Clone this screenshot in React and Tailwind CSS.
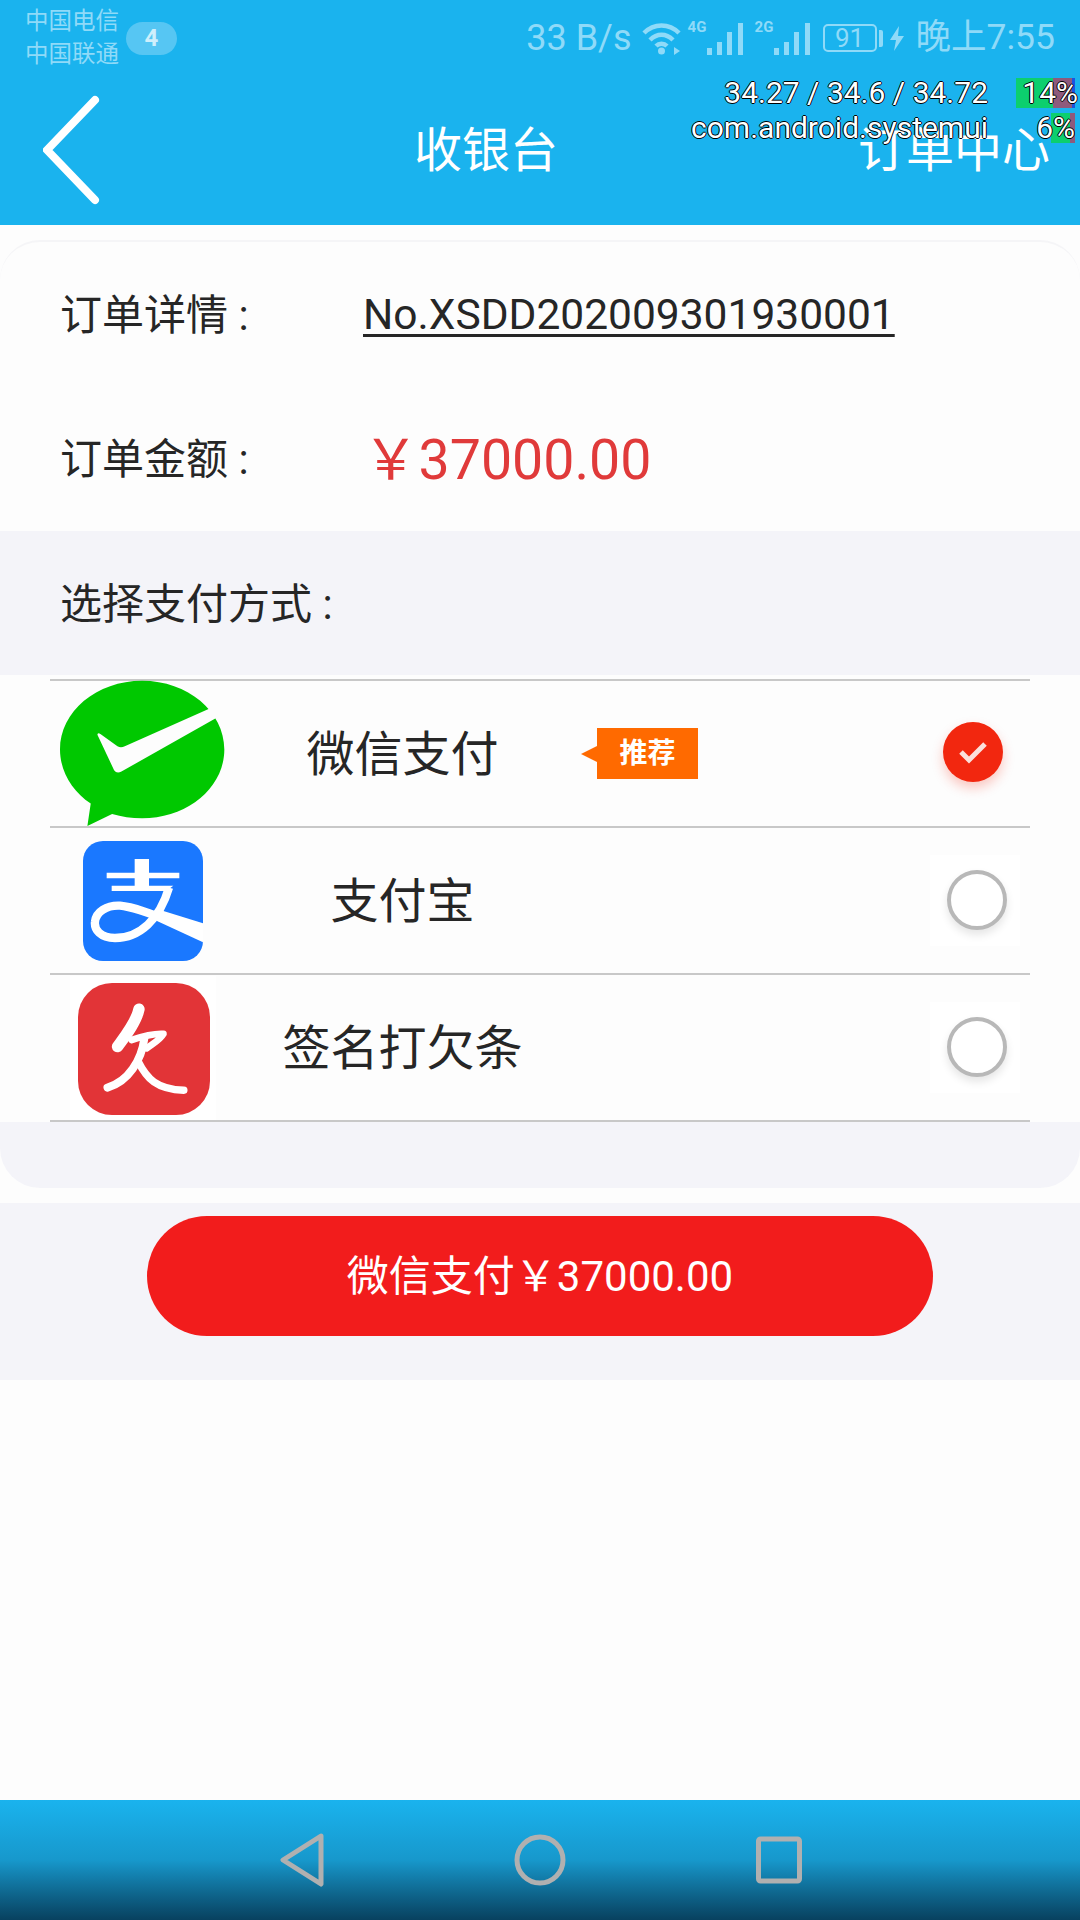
import React from "react";

const WechatIcon = () => (
  <svg width="167" height="147" viewBox="180 60 500 440">
    <path
      d="M426 62C562 62 672 154 672 268C672 382 562 474 426 474C394 474 364 469 336 461L262 497L272 430C217 393 180 334 180 268C180 154 290 62 426 62Z"
      fill="#00c800"
    />
    <path
      d="M292 224Q292 216 302 222L352 258Q362 264 374 258L640 140L680 150L645 175L364 334Q350 342 342 330Z"
      fill="#fdfdfd"
    />
  </svg>
);

const AlipayIcon = () => (
  <svg width="120" height="120" viewBox="0 0 360 360" className="rounded-[20px]">
    <rect width="360" height="360" fill="#1a78ff" />
    <path d="M71 95H289V112H71ZM155 54H198V135H155ZM86 134H271L250 150H86Z" fill="#fff" />
    <path
      d="M258 140C230 235 170 291 96 291C52 291 33 266 36 242C39 212 71 192 111 194C171 199 271 247 360 277"
      fill="none"
      stroke="#fff"
      strokeWidth="25"
    />
    <path d="M222 204L360 247V304L222 240Z" fill="#fff" />
  </svg>
);

const IouIcon = () => (
  <div className="w-[146px] h-[144px] bg-white flex items-center justify-center pl-[2px] pt-[3px]">
    <svg width="132" height="132" viewBox="0 0 394 394" className="rounded-[34px] blur-[0.7px]">
      <rect width="394" height="394" fill="#e23437" />
      <g fill="none" stroke="#fff" strokeLinecap="round" strokeLinejoin="round">
        <path d="M182 78C175 115 140 160 118 190" strokeWidth="34" />
        <path d="M160 170C190 160 225 150 255 152C245 170 225 180 205 195" strokeWidth="20" />
        <path d="M198 165C190 230 150 295 88 312" strokeWidth="24" />
        <path d="M180 235C205 285 235 318 316 320" strokeWidth="22" />
      </g>
    </svg>
  </div>
);

const CheckedRadio = () => (
  <div className="w-[60px] h-[60px] mr-[4px] mb-[4px] rounded-full bg-[#f2270f] flex items-center justify-center shadow-[0_6px_12px_rgba(242,39,15,0.25)]">
    <svg width="32" height="26" viewBox="0 0 32 26">
      <path d="M4 13L12 21L28 5" fill="none" stroke="#fbe0dc" strokeWidth="5" />
    </svg>
  </div>
);

const EmptyRadio = () => (
  <div className="w-[90px] h-[91px] bg-white flex items-center justify-center pl-[4px] pb-[1px]">
    <div className="w-[60px] h-[60px] rounded-full bg-white border-[4px] border-[#b8b8b8] shadow-[0_5px_8px_rgba(0,0,0,0.1)] blur-[0.7px]" />
  </div>
);

const Signal = ({ label }) => (
  <div className="relative w-[55px] h-[33px]">
    <span className="absolute left-0 top-[-5px] text-[15px] font-bold leading-[20px]">{label}</span>
    <svg width="55" height="33" viewBox="0 0 55 33" fill="currentColor">
      <rect x="19" y="26" width="5" height="7" />
      <rect x="29" y="20" width="5" height="13" />
      <rect x="39" y="10" width="5" height="23" />
      <rect x="50" y="1" width="5" height="32" />
    </svg>
  </div>
);

const StatusBar = () => (
  <div className="h-[72px] flex justify-between items-start pl-[25px] pr-[25px] text-[#8fdaf8]">
    <div className="flex items-center pt-[5px]">
      <div className="text-[23.5px] leading-[33px]">
        <div>中国电信</div>
        <div>中国联通</div>
      </div>
      <div className="ml-[7px] w-[51px] h-[33px] rounded-full bg-[#56c6f3] text-[#cfeffc] text-[24px] font-bold flex items-center justify-center">
        4
      </div>
    </div>
    <div className="flex items-center pt-[12px] h-[64px]">
      <span className="text-[36px] leading-none mr-[10px]">33 B/s</span>
      <svg width="39" height="33" viewBox="0 0 39 33" className="mr-[7px]" fill="none" stroke="currentColor" strokeWidth="4.5">
        <path d="M2 11C12 1 27 1 37 11" />
        <path d="M8 18C15 11 24 11 31 18" />
        <path d="M14 24C17 21 22 21 25 24" />
        <circle cx="19.5" cy="29" r="3.5" fill="currentColor" stroke="none" />
        <path d="M32 33V25L38 29Z" fill="currentColor" stroke="none" />
      </svg>
      <Signal label="4G" />
      <div className="w-[12px]" />
      <Signal label="2G" />
      <div className="ml-[13px] w-[54px] h-[28px] border-[2px] border-current rounded-[5px] text-[26px] leading-[24px] text-center">
        91
      </div>
      <div className="ml-[2px] w-[4px] h-[17px] bg-current rounded-r-[2px]" />
      <svg width="14" height="25" viewBox="0 0 14 25" className="ml-[7px]" fill="currentColor">
        <path d="M9 0L0 14H6L4 25L14 10H8Z" />
      </svg>
      <span className="text-[35.5px] leading-none ml-[12px]">晚上7:55</span>
    </div>
  </div>
);

const Overlay = () => (
  <div className="absolute top-[78px] left-0 w-[1080px] text-white text-[30px] leading-[30px] [text-shadow:1px_0_0_#000,-1px_0_0_#000,0_1px_0_#000,0_-1px_0_#000]">
    <div className="relative h-[35px]">
      <span className="absolute right-[92px] top-0">34.27 / 34.6 / 34.72</span>
      <div className="absolute left-[1016px] top-0 h-[30px] flex">
        <div className="w-[37px] bg-[#0ccf6e]" />
        <div className="w-[19px] bg-[#8e5a7c]" />
        <div className="w-[3px] bg-[#1a55e0]" />
      </div>
      <span className="absolute right-[2px] top-0">14%</span>
    </div>
    <div className="relative h-[30px]">
      <span className="absolute right-[92px] top-0">com.android.systemui</span>
      <div className="absolute left-[1051px] top-0 h-[30px] flex">
        <div className="w-[19px] bg-[#0ccf6e]" />
        <div className="w-[5px] bg-[#8e5a7c]" />
      </div>
      <span className="absolute right-[5px] top-0">6%</span>
    </div>
  </div>
);

const PayRow = ({ icon, name, tag, radio }) => (
  <div className="h-[147px] mx-[50px] border-b-2 border-[#c8c8c8] flex items-center">
    <div className="w-[186px] flex justify-center">{icon}</div>
    <div className="w-[332px] pl-[1px] pt-[2px] text-center text-[48px] text-[#262626]">{name}</div>
    {tag && (
      <div className="ml-[13px] flex items-center">
        <div className="w-0 h-0 border-y-[8px] border-y-transparent border-r-[16px] border-r-[#ff6a00]" />
        <div className="w-[101px] h-[51px] bg-[#ff6a00] text-white text-[28px] font-bold flex items-center justify-center">
          {tag}
        </div>
      </div>
    )}
    <div className="ml-auto flex justify-center w-[110px]">{radio}</div>
  </div>
);

const NavBar = () => (
  <div className="h-[120px] bg-gradient-to-b from-[#1ab3ee] via-[#1798cc] via-50% to-[#08415f] flex items-center justify-center pl-[40px]">
    <svg width="560" height="56" viewBox="0 0 560 56" fill="none" stroke="#b0b0b0" strokeWidth="5" strokeLinejoin="round">
      <path d="M41 4L3 28L41 52Z" />
      <circle cx="260" cy="28" r="23" />
      <rect x="478.5" y="7" width="41" height="42" rx="2" />
    </svg>
  </div>
);

export default function App() {
  return (
    <div className="relative w-[1080px] h-[1920px] flex flex-col bg-[#fdfdfd] font-['Roboto','Noto_Sans_CJK_SC',sans-serif] overflow-hidden">
      <header className="h-[225px] bg-[#1ab3ee] shrink-0">
        <StatusBar />
        <div className="h-[153px] flex items-center justify-between pl-[43px] pr-[30px] text-white text-[48px]">
          <svg width="60" height="112" viewBox="0 0 60 112" fill="none" stroke="#fff" strokeWidth="8" strokeLinecap="round" className="mt-[2px] blur-[0.5px]">
            <path d="M52 6L4 56L52 106" />
          </svg>
          <div className="ml-[311px] mt-[5px]">收银台</div>
          <div className="ml-auto mt-[5px]">订单中心</div>
        </div>
      </header>
      <Overlay />

      <main className="flex-1 pt-[15px]">
        <div className="rounded-t-[40px] border-t-2 border-[#f5f5f7]">
          <div className="h-[289px] px-[60px] text-[#262626]">
            <div className="h-[146px] flex items-center text-[42px]">
              <span className="w-[303px]">订单详情 :</span>
              <span className="text-[42.5px] underline decoration-[3px] underline-offset-[5px]">No.XSDD202009301930001</span>
            </div>
            <div className="h-[143px] flex items-center text-[42px]">
              <span className="w-[303px]">订单金额 :</span>
              <span className="text-[55.5px] text-[#e03a3a] pt-[3px]">￥37000.00</span>
            </div>
          </div>
          <div className="h-[144px] bg-[#f4f4f9] flex items-center pl-[60px] pt-[2px] text-[42px] text-[#262626]">选择支付方式 :</div>
        </div>
        <div className="pt-[2px] border-t-[2px] border-[#fdfdfd]">
          <div className="border-t-2 mx-[50px] border-[#c8c8c8]" />
          <PayRow icon={<WechatIcon />} name="微信支付" tag="推荐" radio={<CheckedRadio />} />
          <PayRow icon={<AlipayIcon />} name="支付宝" radio={<EmptyRadio />} />
          <PayRow icon={<IouIcon />} name="签名打欠条" radio={<EmptyRadio />} />
        </div>
        <div className="h-[66px] rounded-b-[40px] bg-[#f4f4f9]" />
        <div className="mt-[15px] h-[177px] bg-[#f4f4f9] pt-[13px] flex justify-center items-start">
          <button className="w-[786px] h-[120px] rounded-full bg-[#f21c1c] text-white text-[42px]">微信支付￥37000.00</button>
        </div>
      </main>

      <NavBar />
    </div>
  );
}
